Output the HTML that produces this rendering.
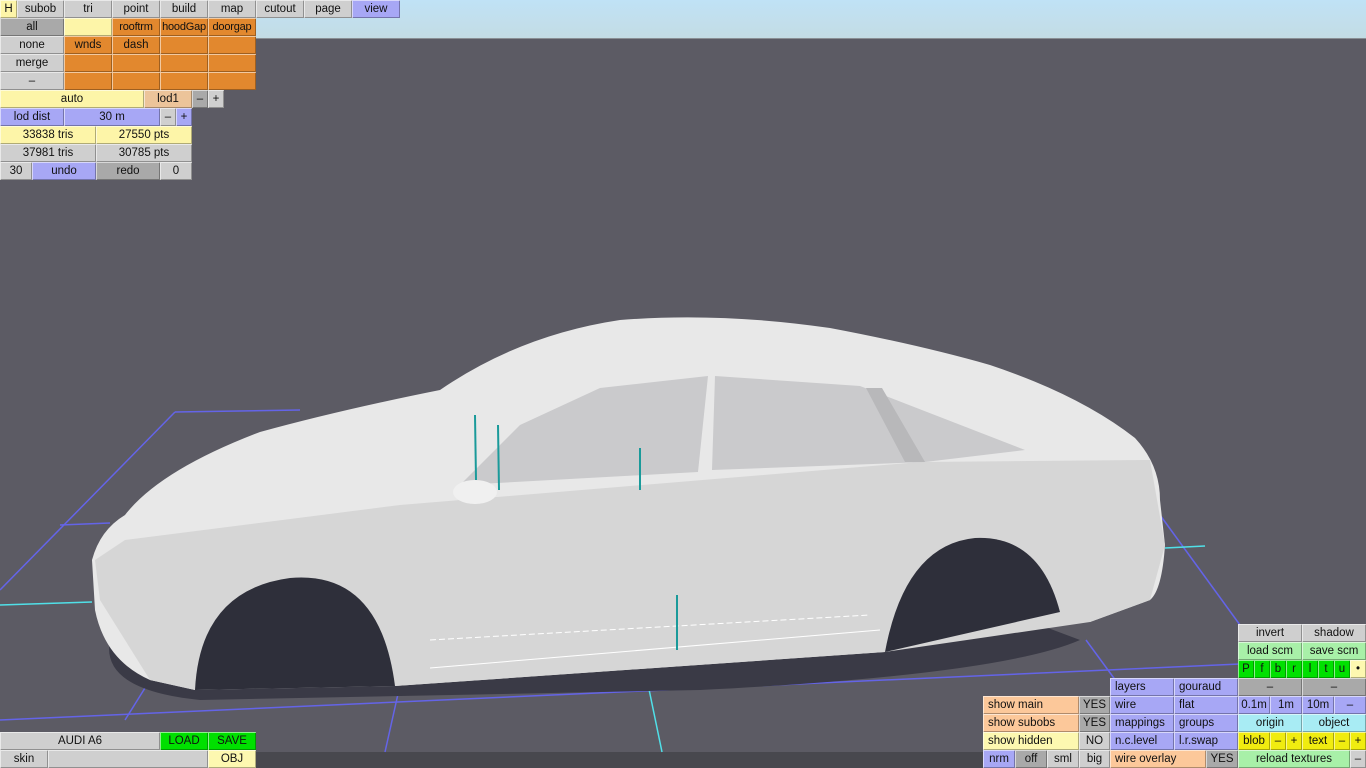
<!DOCTYPE html>
<html><head><meta charset="utf-8"><style>
html,body{margin:0;padding:0}
body{width:1366px;height:768px;position:relative;overflow:hidden;background:#5c5b64;font-family:"Liberation Sans",sans-serif;font-size:11.5px;color:#111}
.b{position:absolute;height:18px;line-height:18px;text-align:center;box-sizing:border-box;white-space:nowrap;overflow:hidden;box-shadow:inset 1px 1px 0 rgba(255,255,255,.55),inset -1px -1px 0 rgba(0,0,0,.3)}
.l{text-align:left;padding-left:5px}
.n{letter-spacing:-0.2px;font-size:11px}
.g{background:#cfcfcf}.dg{background:#a9a9a9}.y{background:#fdf5a8}.o{background:#e2882e}.bl{background:#a7a7f5}.t{background:#ecc49a}
.gr{background:#00e000}.lg{background:#a8f0a8}.c{background:#a8ecf4}.yy{background:#f0ec10}.pk{background:#fcc89a}.ly{background:#fdf8b0}
</style></head><body>
<div style="position:absolute;left:0;top:0;width:1366px;height:38px;background:linear-gradient(#c0e2f6,#c3dce4)"></div>
<div style="position:absolute;left:0;top:38px;width:1366px;height:1px;background:#8a8f94"></div>
<div style="position:absolute;left:0;top:752px;width:1366px;height:16px;background:#48484e"></div>
<svg width="1366" height="768" style="position:absolute;left:0;top:0">
<g stroke="#6464e8" stroke-width="1.5" fill="none">
<line x1="0" y1="590" x2="175" y2="412"/><line x1="175" y1="412" x2="300" y2="410"/>
<line x1="60" y1="525" x2="110" y2="523"/>
<line x1="0" y1="720" x2="1240" y2="664"/>
<line x1="1160" y1="515" x2="1240" y2="625"/>
<line x1="1086" y1="640" x2="1130" y2="700"/>
<line x1="150" y1="680" x2="125" y2="720"/>
<line x1="400" y1="685" x2="385" y2="752"/>
</g>
<g stroke="#50e0e8" stroke-width="1.5"><line x1="0" y1="605" x2="92" y2="602"/><line x1="1165" y1="548" x2="1205" y2="546"/><line x1="645" y1="670" x2="662" y2="752"/></g>
<path d="M110,640 Q100,690 200,700 L700,690 Q1000,675 1080,640 L1000,610 L300,640 Z" fill="#3a3a46"/>
<path d="M195,690 L150,680 Q105,660 95,610 L92,560 Q100,530 125,515 Q160,470 260,432 Q340,410 440,390 Q520,335 620,320 Q720,312 830,328 Q920,345 990,365 Q1080,395 1135,438 Q1160,465 1160,500 L1165,545 Q1162,590 1150,600 L1090,622 L1060,612 Q1040,535 975,538 Q905,545 885,652 L395,686 Q380,570 290,578 Q200,590 195,690 Z" fill="#e8e8e8"/>
<path d="M100,600 L95,560 L125,540 L400,505 L920,462 L1150,460 L1165,545 L1150,600 L1090,622 L885,652 L395,686 L195,690 L150,680 Z" fill="#d6d6d6"/>
<path d="M195,690 Q200,590 290,578 Q380,570 395,686 Z" fill="#2e2f3a"/>
<path d="M885,652 Q905,545 975,538 Q1040,535 1060,612 Z" fill="#2e2f3a"/>
<path d="M460,485 L520,425 L600,388 L708,376 L698,472 Z" fill="#cacacc"/>
<path d="M715,376 L860,386 L1025,450 L925,462 L712,470 Z" fill="#cacacc"/>
<path d="M866,388 L882,388 L925,462 L905,462 Z" fill="#b8b8ba"/>
<ellipse cx="475" cy="492" rx="22" ry="12" fill="#f0f0f0"/>
<path d="M430,640 L870,615" stroke="#fff" stroke-dasharray="6 3" fill="none"/>
<path d="M430,668 L880,630" stroke="#fff" fill="none"/>
<g stroke="#1a9a9a" stroke-width="2"><line x1="475" y1="415" x2="476" y2="480"/><line x1="498" y1="425" x2="499" y2="490"/><line x1="640" y1="448" x2="640" y2="490"/><line x1="677" y1="595" x2="677" y2="650"/></g>
</svg>
<div class="b y" style="left:0;top:0;width:17px">H</div>
<div class="b g" style="left:17px;top:0;width:47px">subob</div>
<div class="b g" style="left:64px;top:0;width:48px">tri</div>
<div class="b g" style="left:112px;top:0;width:48px">point</div>
<div class="b g" style="left:160px;top:0;width:48px">build</div>
<div class="b g" style="left:208px;top:0;width:48px">map</div>
<div class="b g" style="left:256px;top:0;width:48px">cutout</div>
<div class="b g" style="left:304px;top:0;width:48px">page</div>
<div class="b bl" style="left:352px;top:0;width:48px">view</div>
<div class="b dg" style="left:0;top:18px;width:64px">all</div>
<div class="b y" style="left:64px;top:18px;width:48px"></div>
<div class="b o n" style="left:112px;top:18px;width:48px">rooftrm</div>
<div class="b o n" style="left:160px;top:18px;width:48px">hoodGap</div>
<div class="b o n" style="left:208px;top:18px;width:48px">doorgap</div>
<div class="b g" style="left:0;top:36px;width:64px">none</div>
<div class="b o" style="left:64px;top:36px;width:48px">wnds</div>
<div class="b o" style="left:112px;top:36px;width:48px">dash</div>
<div class="b o" style="left:160px;top:36px;width:48px"></div>
<div class="b o" style="left:208px;top:36px;width:48px"></div>
<div class="b g" style="left:0;top:54px;width:64px">merge</div>
<div class="b o" style="left:64px;top:54px;width:48px"></div><div class="b o" style="left:112px;top:54px;width:48px"></div><div class="b o" style="left:160px;top:54px;width:48px"></div><div class="b o" style="left:208px;top:54px;width:48px"></div>
<div class="b g" style="left:0;top:72px;width:64px">–</div>
<div class="b o" style="left:64px;top:72px;width:48px"></div><div class="b o" style="left:112px;top:72px;width:48px"></div><div class="b o" style="left:160px;top:72px;width:48px"></div><div class="b o" style="left:208px;top:72px;width:48px"></div>
<div class="b y" style="left:0;top:90px;width:144px">auto</div>
<div class="b t" style="left:144px;top:90px;width:48px">lod1</div>
<div class="b dg" style="left:192px;top:90px;width:16px">–</div>
<div class="b g" style="left:208px;top:90px;width:16px">+</div>
<div class="b bl" style="left:0;top:108px;width:64px">lod dist</div>
<div class="b bl" style="left:64px;top:108px;width:96px">30 m</div>
<div class="b g" style="left:160px;top:108px;width:16px">–</div>
<div class="b bl" style="left:176px;top:108px;width:16px">+</div>
<div class="b y" style="left:0;top:126px;width:96px">33838 tris</div>
<div class="b y" style="left:96px;top:126px;width:96px">27550 pts</div>
<div class="b g" style="left:0;top:144px;width:96px">37981 tris</div>
<div class="b g" style="left:96px;top:144px;width:96px">30785 pts</div>
<div class="b g" style="left:0;top:162px;width:32px">30</div>
<div class="b bl" style="left:32px;top:162px;width:64px">undo</div>
<div class="b dg" style="left:96px;top:162px;width:64px">redo</div>
<div class="b g" style="left:160px;top:162px;width:32px">0</div>
<div class="b g" style="left:0;top:732px;width:160px">AUDI A6</div>
<div class="b gr" style="left:160px;top:732px;width:48px">LOAD</div>
<div class="b gr" style="left:208px;top:732px;width:48px">SAVE</div>
<div class="b g" style="left:0;top:750px;width:48px">skin</div>
<div class="b g" style="left:48px;top:750px;width:160px"></div>
<div class="b ly" style="left:208px;top:750px;width:48px">OBJ</div>
<div class="b g" style="left:1238px;top:624px;width:64px">invert</div>
<div class="b g" style="left:1302px;top:624px;width:64px">shadow</div>
<div class="b lg" style="left:1238px;top:642px;width:64px">load scm</div>
<div class="b lg" style="left:1302px;top:642px;width:64px">save scm</div>
<div class="b gr" style="left:1238px;top:660px;width:16px">P</div>
<div class="b gr" style="left:1254px;top:660px;width:16px">f</div>
<div class="b gr" style="left:1270px;top:660px;width:16px">b</div>
<div class="b gr" style="left:1286px;top:660px;width:16px">r</div>
<div class="b gr" style="left:1302px;top:660px;width:16px">l</div>
<div class="b gr" style="left:1318px;top:660px;width:16px">t</div>
<div class="b gr" style="left:1334px;top:660px;width:16px">u</div>
<div class="b ly" style="left:1350px;top:660px;width:16px">•</div>
<div class="b bl l" style="left:1110px;top:678px;width:64px">layers</div>
<div class="b bl l" style="left:1174px;top:678px;width:64px">gouraud</div>
<div class="b dg" style="left:1238px;top:678px;width:64px">–</div>
<div class="b dg" style="left:1302px;top:678px;width:64px">–</div>
<div class="b pk l" style="left:983px;top:696px;width:96px">show main</div>
<div class="b dg" style="left:1079px;top:696px;width:31px">YES</div>
<div class="b bl l" style="left:1110px;top:696px;width:64px">wire</div>
<div class="b bl l" style="left:1174px;top:696px;width:64px">flat</div>
<div class="b bl" style="left:1238px;top:696px;width:32px">0.1m</div>
<div class="b bl" style="left:1270px;top:696px;width:32px">1m</div>
<div class="b bl" style="left:1302px;top:696px;width:32px">10m</div>
<div class="b bl" style="left:1334px;top:696px;width:32px">–</div>
<div class="b pk l" style="left:983px;top:714px;width:96px">show subobs</div>
<div class="b dg" style="left:1079px;top:714px;width:31px">YES</div>
<div class="b bl l" style="left:1110px;top:714px;width:64px">mappings</div>
<div class="b bl l" style="left:1174px;top:714px;width:64px">groups</div>
<div class="b c" style="left:1238px;top:714px;width:64px">origin</div>
<div class="b c" style="left:1302px;top:714px;width:64px">object</div>
<div class="b ly l" style="left:983px;top:732px;width:96px">show hidden</div>
<div class="b g" style="left:1079px;top:732px;width:31px">NO</div>
<div class="b bl l" style="left:1110px;top:732px;width:64px">n.c.level</div>
<div class="b bl l" style="left:1174px;top:732px;width:64px">l.r.swap</div>
<div class="b yy" style="left:1238px;top:732px;width:32px">blob</div>
<div class="b yy" style="left:1270px;top:732px;width:16px">–</div>
<div class="b yy" style="left:1286px;top:732px;width:16px">+</div>
<div class="b yy" style="left:1302px;top:732px;width:32px">text</div>
<div class="b yy" style="left:1334px;top:732px;width:16px">–</div>
<div class="b yy" style="left:1350px;top:732px;width:16px">+</div>
<div class="b bl" style="left:983px;top:750px;width:32px">nrm</div>
<div class="b dg" style="left:1015px;top:750px;width:32px">off</div>
<div class="b g" style="left:1047px;top:750px;width:32px">sml</div>
<div class="b g" style="left:1079px;top:750px;width:31px">big</div>
<div class="b pk l" style="left:1110px;top:750px;width:96px">wire overlay</div>
<div class="b dg" style="left:1206px;top:750px;width:32px">YES</div>
<div class="b lg" style="left:1238px;top:750px;width:112px">reload textures</div>
<div class="b g" style="left:1350px;top:750px;width:16px">–</div>
</body></html>
